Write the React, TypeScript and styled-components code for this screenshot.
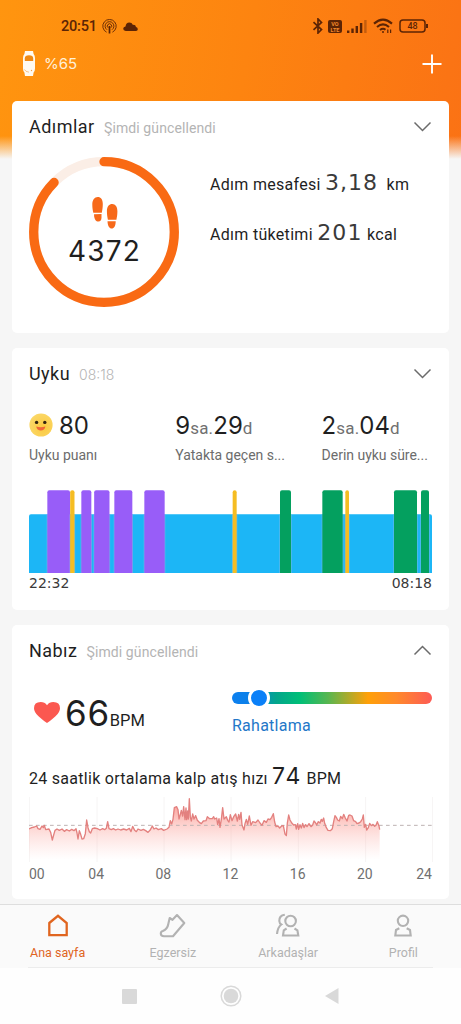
import React from 'react';
import styled, { createGlobalStyle } from 'styled-components';

const Global = createGlobalStyle`
  *, *::before, *::after { box-sizing: border-box; }
  body { margin: 0; background: #f6f6f6; }
  svg { display: block; flex: none; }
`;

const Page = styled.main`
  width: 461px;
  height: 1024px;
  overflow: hidden;
  display: flex;
  flex-direction: column;
  font-family: Roboto, "Liberation Sans", sans-serif;
  color: #1f1f1f;
  background:
    linear-gradient(180deg, rgba(246, 246, 246, 0) 136px, #f6f6f6 159px),
    linear-gradient(100deg, #ff950f 0, #fd8410 40%, #fa6c16 88%, #f96818 100%);
`;

const StatusBar = styled.header`
  height: 45px;
  padding: 7px 32px 0 61px;
  display: flex;
  align-items: center;
  color: #5c2405;
`;

const Clock = styled.span`
  font-size: 14.5px;
  font-weight: 500;
  width: 41px;
  letter-spacing: -0.2px;
`;

const StatusIcons = styled.div<{ $end?: boolean }>`
  display: flex;
  align-items: center;
  gap: ${(p) => (p.$end ? 5 : 6)}px;
  margin-left: ${(p) => (p.$end ? 'auto' : '0')};
`;

const DeviceBar = styled.div`
  height: 56px;
  padding: 0 19px 19px 23px;
  display: flex;
  align-items: center;
  color: #fff;
`;

const DeviceCharge = styled.span`
  flex: 1;
  margin-left: 9px;
  font: 400 15px Inter, sans-serif;
  color: #fff0d8;
`;

const Cards = styled.div`
  flex: 1;
  padding: 0 12px;
  display: flex;
  flex-direction: column;
  gap: 15px;
`;

const Card = styled.section<{ $height: number }>`
  flex: none;
  height: ${(p) => p.$height}px;
  padding: 0 17px;
  border-radius: 5px;
  background: #fff;
`;

const CardHead = styled.div`
  height: 52px;
  display: flex;
  align-items: baseline;
  line-height: 52px;
`;

const CardTitle = styled.h2<{ $width: number }>`
  margin: 0;
  width: ${(p) => p.$width}px;
  white-space: nowrap;
  font-size: 18px;
  font-weight: 400;
  letter-spacing: 0.45px;
`;

const CardNote = styled.span<{ $wide?: boolean }>`
  flex: 1;
  font-size: 14px;
  letter-spacing: 0.1px;
  color: #b4b4b4;
  ${(p) => p.$wide && 'font-family: Inter, sans-serif; font-weight: 350; font-size: 14px; letter-spacing: 0;'}
`;

const ChevronBox = styled.span`
  align-self: center;
  margin-top: -1px;
`;

const StepsBody = styled.div`
  display: flex;
  padding-top: 4px;
  gap: 30px;
`;

const Ring = styled.div`
  display: grid;
  width: 151px;
  height: 151px;
  > * { grid-area: 1 / 1; }
`;

const RingContent = styled.div`
  display: flex;
  flex-direction: column;
  align-items: center;
  padding-top: 40px;
`;

const StepCount = styled.span`
  margin-top: 2px;
  font: 400 28px/40px Inter, sans-serif;
  letter-spacing: 1.2px;
`;

const StepStats = styled.div`
  padding-top: 3px;
`;

const StatLine = styled.div`
  height: 50px;
  line-height: 50px;
  font-size: 16px;
  white-space: pre;
  letter-spacing: 0.3px;
`;

const SlabNumber = styled.span<{ $size: number; $spacing?: number }>`
  font-family: "DejaVu Sans", sans-serif;
  font-size: ${(p) => p.$size}px;
  line-height: 1;
  letter-spacing: ${(p) => p.$spacing ?? 0}px;
  color: #3a3a3a;
`;

const Figure = styled.span<{ $size: number; $spacing?: number }>`
  font-family: Inter, sans-serif;
  font-weight: 400;
  font-size: ${(p) => p.$size}px;
  letter-spacing: ${(p) => p.$spacing ?? 0}px;
  line-height: 1;
`;

const Metrics = styled.div`
  display: grid;
  grid-template-columns: 146.3px 146.3px 1fr;
  height: 90px;
`;

const MetricValue = styled.div`
  display: flex;
  align-items: baseline;
  height: 44px;
  line-height: 56px;
  &::before { content: '\\200b'; font-size: 17px; }
  svg { align-self: center; margin: 6px 6px 0 0; }
`;

const Unit = styled.span`
  font-size: 17px;
  letter-spacing: 0.2px;
  color: #707070;
`;

const MetricLabel = styled.div`
  font-size: 14px;
  line-height: 22px;
  letter-spacing: -0.02px;
  white-space: nowrap;
  color: #6c6c6c;
`;

const TimeRange = styled.div`
  display: flex;
  justify-content: space-between;
  padding-top: 3px;
`;

const PulseRow = styled.div`
  display: flex;
  height: 78px;
`;

const PulseNow = styled.div`
  display: flex;
  align-items: baseline;
  width: 203px;
  padding-left: 5px;
  line-height: 88px;
  font-size: 16.5px;
  svg { align-self: center; margin: -8px 5px 0 0; }
`;

const ZoneColumn = styled.div`
  width: 200px;
  padding-top: 15px;
`;

const ZoneTrack = styled.div`
  height: 12px;
  border-radius: 6px;
  background: linear-gradient(90deg, #0c80f0 0, #0c80e8 8%, #03a58c 22%, #00bf77 34%, #58b650 48%, #ffa008 68%, #ff8a2b 82%, #fd5b55 100%);
`;

const ZoneThumb = styled.div`
  position: relative;
  top: -5px;
  left: 16px;
  width: 22px;
  height: 22px;
  border: 3px solid #fff;
  border-radius: 50%;
  background: #0a80f8;
`;

const ZoneName = styled.div`
  margin-top: 12px;
  font-size: 16px;
  line-height: 20px;
  letter-spacing: 0.25px;
  color: #2377c8;
`;

const Average = styled.div`
  height: 42px;
  line-height: 48px;
  font-size: 16px;
  letter-spacing: 0.28px;
  white-space: pre;
`;

const Hours = styled.div`
  display: grid;
  grid-template-columns: 0.5fr repeat(5, 1fr) 0.5fr;
  text-align: center;
  font-size: 14px;
  line-height: 24px;
  color: #707070;
  span:first-child { text-align: left; }
  span:last-child { text-align: right; }
`;

const TabBar = styled.nav`
  flex: none;
  height: 64px;
  display: grid;
  grid-template-columns: repeat(4, 1fr);
  border-top: 1px solid #dedede;
  background: #fafafa;
`;

const Tab = styled.a<{ $active?: boolean }>`
  display: flex;
  flex-direction: column;
  align-items: center;
  padding-top: 8px;
  font-size: 12.5px;
  line-height: 28px;
  color: ${(p) => (p.$active ? '#e0651f' : '#b2b2b2')};
`;

const SystemNav = styled.div`
  flex: none;
  height: 56px;
  display: flex;
  justify-content: center;
  align-items: center;
  gap: 83px;
  background: #fefefe;
`;

const Divider = styled.hr`
  flex: none;
  width: 405px;
  height: 1px;
  margin: -1px auto 0;
  border: 0;
  background: #ececec;
`;

const Chevron = ({ up }: { up?: boolean }) => (
  <ChevronBox>
    <svg width="19" height="11" viewBox="0 0 19 11" fill="none" stroke="#6b6b6b" strokeWidth="1.5">
      <path d={up ? 'M1.5 9.5 9.5 1.5l8 8' : 'M1.5 1.5l8 8 8-8'} />
    </svg>
  </ChevronBox>
);

type Stage = 'rem' | 'awake' | 'deep';
const stageColor: Record<Stage, string> = { rem: '#985df8', awake: '#f5bd22', deep: '#04a05f' };
const stages: [number, number, Stage][] = [
  [55, 68, 'rem'], [123.5, 13, 'awake'], [157, 30, 'rem'], [195.5, 46, 'rem'],
  [256, 54, 'rem'], [346, 61, 'rem'], [611, 12, 'awake'], [753, 33, 'deep'],
  [880, 61, 'deep'], [949, 11, 'awake'], [1095, 69, 'deep'], [1176, 24, 'deep'],
];

const SleepChart = () => (
  <svg width="403" height="83" viewBox="0 0 1209 249">
    <path d="M0 249V79q0-6 6-6h1197q6 0 6 6v170Z" fill="#1cb6f6" />
    {stages.map(([x, w, kind]) => {
      const r = Math.min(w, 12) / 2;
      return (
        <g key={x}>
          <rect x={x - 2} y="73" width={w + 4} height="176" fill="#8fb9df" opacity="0.6" />
          <path
            d={`M${x} 249V${r + 1}q0-${r} ${r}-${r}h${w - 2 * r}q${r} 0 ${r} ${r}V249Z`}
            fill={stageColor[kind]}
          />
        </g>
      );
    })}
  </svg>
);

const pulse =
  '87,208 95,204 103,202 110,199 114,207 120,209 126,199 130,204 133,197 137,210 147,208 152,218 157,241 161,226 165,212 171,208 178,212 186,208 193,215 200,210 208,214 215,209 222,213 228,207 231,220 234,238 238,213 242,224 246,238 251,237 256,222 260,181 264,204 268,216 272,220 277,207 284,205 292,207 300,211 308,207 314,210 319,206 323,186 327,207 334,210 340,207 347,211 354,208 362,211 371,208 380,211 388,206 393,216 398,200 404,212 409,216 414,208 423,212 430,209 437,213 444,218 450,212 457,199 462,208 468,205 475,210 484,207 491,212 501,208 507,203 511,183 515,193 519,179 523,144 530,141 534,150 537,178 541,164 544,152 548,169 551,141 555,180 558,145 560,180 563,154 565,178 568,117 571,172 574,184 578,163 582,178 587,168 592,182 598,188 604,192 610,184 618,183 622,171 629,177 637,177 641,171 644,178 650,175 653,195 657,177 660,203 664,179 668,144 672,178 679,171 683,182 687,187 691,165 696,183 701,171 707,163 712,184 716,164 719,179 723,158 726,196 732,211 735,192 739,179 743,194 748,169 753,197 758,186 767,189 774,181 780,190 786,197 792,183 799,188 804,178 810,180 815,173 820,162 824,187 828,201 834,199 839,205 845,199 850,198 855,223 859,228 862,190 866,166 870,181 876,191 881,196 886,195 889,208 893,192 896,209 900,195 904,205 908,191 912,204 917,195 921,201 927,192 933,201 938,196 942,184 947,190 950,196 955,186 960,190 964,179 967,185 971,175 974,191 979,204 984,212 991,213 997,207 1001,186 1005,168 1009,173 1013,181 1018,184 1022,170 1027,177 1031,164 1036,175 1041,184 1046,167 1050,166 1056,169 1061,183 1067,186 1071,192 1077,190 1082,186 1087,178 1090,166 1093,203 1097,194 1100,211 1105,204 1109,191 1114,198 1119,194 1124,200 1128,197 1132,186 1137,199 1139,210';

const PulseChart = () => (
  <svg width="404" height="65" viewBox="87 112 1212 195">
    <defs>
      <linearGradient id="pulseFill" x1="0" y1="117" x2="0" y2="300" gradientUnits="userSpaceOnUse">
        <stop offset="0" stopColor="#f86b61" stopOpacity="0.75" />
        <stop offset="0.4" stopColor="#fb8b82" stopOpacity="0.42" />
        <stop offset="0.66" stopColor="#fba59e" stopOpacity="0.26" />
        <stop offset="1" stopColor="#fdb5ae" stopOpacity="0" />
      </linearGradient>
    </defs>
    {[88, 291, 492, 693, 895, 1097, 1298].map((x) => (
      <path key={x} d={`M${x} 112V307`} stroke="#f6f4f4" strokeWidth="3" />
    ))}
    <path d={`M87,300 L${pulse} L1139,300Z`} fill="url(#pulseFill)" />
    <path d="M87 197H1298" stroke="#bdb3b3" strokeWidth="3" strokeDasharray="11 10" />
    <polyline points={pulse} fill="none" stroke="#e3817f" strokeWidth="4" strokeLinejoin="round" />
  </svg>
);

const Smiley = () => (
  <svg width="24" height="24" viewBox="0 0 24 24">
    <defs>
      <radialGradient id="face" cx="0.6" cy="0.6" r="0.6">
        <stop offset="0" stopColor="#fbc93e" />
        <stop offset="1" stopColor="#fbd766" />
      </radialGradient>
    </defs>
    <circle cx="12" cy="12" r="11.6" fill="url(#face)" />
    <circle cx="7.6" cy="9.4" r="1.7" fill="#33230f" />
    <circle cx="15.8" cy="9.4" r="1.7" fill="#33230f" />
    <path d="M7.2 13.6q4.6 1.3 9.2 0-.8 4-4.6 4t-4.6-4Z" fill="#ef6638" />
  </svg>
);

export default function App() {
  return (
    <>
      <Global />
      <Page>
        <StatusBar>
          <Clock>20:51</Clock>
          <StatusIcons>
            <svg width="15" height="15" viewBox="0 0 15 15" fill="none" stroke="currentColor" strokeWidth="0.9">
              <path d="M4.6 13.2a6.7 6.7 0 1 1 5.8 0" />
              <path d="M5 10.7a4.4 4.4 0 1 1 5 0" />
              <path d="M6.2 8.8a2.2 2.2 0 1 1 2.6 0" />
              <path d="M7.5 7v7.5" strokeWidth="1.7" />
            </svg>
            <svg width="15" height="9" viewBox="0 0 15 9" fill="currentColor">
              <path d="M2.8 9Q.2 8.8.2 6.8.3 5 2.5 4.5 3 .5 6.3.5q2.5 0 3.7 2.4 2.6-.3 3 2.2 1.8.5 1.8 2.1 0 1.6-1.8 1.8Z" />
            </svg>
          </StatusIcons>
          <StatusIcons $end>
            <svg width="11" height="16" viewBox="0 0 11 16" fill="none" stroke="currentColor" strokeWidth="1.7">
              <path d="M1.500 4.200l8 7.300L6 15V1L9.500 4.500l-8 7.300" />
            </svg>
            <svg width="14" height="13" viewBox="0 0 14 13">
              <rect width="14" height="13" rx="2" fill="currentColor" />
              <g fill="#f58a2a" fontFamily="Roboto, sans-serif" fontWeight="700" textAnchor="middle">
                <text x="7" y="6" fontSize="5.5">VO</text>
                <text x="7" y="11.5" fontSize="5.5">LTE</text>
              </g>
            </svg>
            <svg width="21" height="13" viewBox="0 0 21 13" fill="currentColor">
              <rect x="0" y="10.5" width="2.4" height="2.5" />
              <rect x="4.3" y="8.5" width="2.4" height="4.5" />
              <rect x="8.6" y="6" width="2.4" height="7" />
              <rect x="12.9" y="3" width="2.4" height="10" />
              <rect x="17.2" y="0" width="2.4" height="13" opacity="0.35" />
            </svg>
            <svg width="21" height="16" viewBox="0 0 21 16" fill="none" stroke="currentColor" strokeWidth="2.1">
              <path d="M1 5.6q9-8 18 0" />
              <path d="M4 9q6-5.2 12 0" />
              <path d="M7 12q3-2.3 5.5-.3" />
              <circle cx="10" cy="14" r="1" fill="currentColor" stroke="none" />
              <path d="M14.8 11.5v3.5M17.6 11.5v3.5" strokeWidth="1.2" />
            </svg>
            <svg width="30" height="14" viewBox="0 0 30 14">
              <rect x="1" y="1" width="25" height="12" rx="3" fill="none" stroke="currentColor" strokeWidth="1.5" />
              <path d="M28 5v4" stroke="currentColor" strokeWidth="2" />
              <text x="13.5" y="10.3" fill="currentColor" fontFamily="Roboto, sans-serif" fontSize="9" fontWeight="500" textAnchor="middle">48</text>
            </svg>
          </StatusIcons>
        </StatusBar>

        <DeviceBar>
          <svg width="12" height="25" viewBox="0 0 12 25">
            <path d="M2 0h8l.6 3Q12 4.5 12 7v10.5q0 2.8-1.4 4L10 25H2l-.6-3.5Q0 20.3 0 17.5V7Q0 4.5 1.4 3Z" fill="#fffaf0" />
            <path d="M1.8 10V7.5Q1.8 4.2 6 4.2t4.2 3.3V10Z" fill="#ef8a15" />
            <path d="M1.5 18.5q.8 2.2 4.5 2.7" fill="none" stroke="#f3a04a" strokeWidth="0.6" />
            <circle cx="8.5" cy="19.5" r="0.7" fill="#f3a04a" />
          </svg>
          <DeviceCharge>%65</DeviceCharge>
          <svg width="20" height="20" viewBox="0 0 20 20" stroke="#fff" strokeWidth="1.9">
            <path d="M10 .5v19M.5 10h19" />
          </svg>
        </DeviceBar>

        <Cards>
          <Card $height={232}>
            <CardHead>
              <CardTitle $width={75}>Adımlar</CardTitle>
              <CardNote>Şimdi güncellendi</CardNote>
              <Chevron />
            </CardHead>
            <StepsBody>
              <Ring>
                <svg width="151" height="151" viewBox="0 0 151 151" fill="none" strokeWidth="9.3">
                  <circle cx="75" cy="75" r="70.3" stroke="#fbeee6" />
                  <circle cx="75" cy="75" r="70.3" stroke="#f96a14" strokeLinecap="round" pathLength="5000" strokeDasharray="4372 5000" transform="rotate(-90 75 75)" />
                </svg>
                <RingContent>
                  <svg width="26" height="32" viewBox="0 0 26 32" fill="#f7691a">
                    <path d="M5.8 0c3 0 5 2.6 5 7 0 3.8-.5 6.3-1 8.7L1.3 15.8C.8 13.4.3 11 .3 7.5.3 3 2.5 0 5.8 0Z" />
                    <path d="M2 17.2 9.5 17v3.5c0 2.5-1 4-3.2 4S2.2 23 2 17.2Z" />
                    <path d="M20.2 7c3.3 0 5.2 3 5.2 7.3 0 3.6-.5 6-1 8.5l-8.5-.1c-.5-2.4-1-4.9-1-8.7C14.9 9.6 17.2 7 20.2 7Z" />
                    <path d="M15.5 24.2h8.2c-.1 5-1.6 7.3-4 7.3-2.2 0-4-2.3-4.2-7.3Z" />
                  </svg>
                  <StepCount>4372</StepCount>
                </RingContent>
              </Ring>
              <StepStats>
                <StatLine>Adım mesafesi <SlabNumber $size={22} $spacing={1}>3,18</SlabNumber>  km</StatLine>
                <StatLine>Adım tüketimi <SlabNumber $size={22} $spacing={1.2}>201</SlabNumber> kcal</StatLine>
              </StepStats>
            </StepsBody>
          </Card>

          <Card $height={262}>
            <CardHead>
              <CardTitle $width={50}>Uyku</CardTitle>
              <CardNote $wide>08:18</CardNote>
              <Chevron />
            </CardHead>
            <Metrics>
              <div>
                <MetricValue><Smiley /><Figure $size={24}>80</Figure></MetricValue>
                <MetricLabel>Uyku puanı</MetricLabel>
              </div>
              <div>
                <MetricValue>
                  <Figure $size={24}>9</Figure><Unit>sa.</Unit><Figure $size={24}>29</Figure><Unit>d</Unit>
                </MetricValue>
                <MetricLabel>Yatakta geçen s...</MetricLabel>
              </div>
              <div>
                <MetricValue>
                  <Figure $size={24}>2</Figure><Unit>sa.</Unit><Figure $size={24}>04</Figure><Unit>d</Unit>
                </MetricValue>
                <MetricLabel>Derin uyku süre...</MetricLabel>
              </div>
            </Metrics>
            <SleepChart />
            <TimeRange>
              <SlabNumber $size={14}>22:32</SlabNumber>
              <SlabNumber $size={14}>08:18</SlabNumber>
            </TimeRange>
          </Card>

          <Card $height={274}>
            <CardHead>
              <CardTitle $width={57.5}>Nabız</CardTitle>
              <CardNote>Şimdi güncellendi</CardNote>
              <Chevron up />
            </CardHead>
            <PulseRow>
              <PulseNow>
                <svg width="26" height="21" viewBox="0 0 26 21" fill="#fb5850">
                  <path d="M13 21Q11.5 20.5 4.5 14.3 0 10.3 0 6.3 0 0 6.7 0 10.8 0 13 3.3 15.2 0 19.3 0 26 0 26 6.3q0 4-4.5 8Q14.5 20.5 13 21Z" />
                </svg>
                <Figure $size={35} $spacing={0.7}>66</Figure>BPM
              </PulseNow>
              <ZoneColumn>
                <ZoneTrack><ZoneThumb /></ZoneTrack>
                <ZoneName>Rahatlama</ZoneName>
              </ZoneColumn>
            </PulseRow>
            <Average>24 saatlik ortalama kalp atış hızı <Figure $size={23} $spacing={1.8}>74</Figure> BPM</Average>
            <PulseChart />
            <Hours>
              {['00', '04', '08', '12', '16', '20', '24'].map((h) => <span key={h}>{h}</span>)}
            </Hours>
          </Card>
        </Cards>

        <TabBar>
          <Tab $active>
            <svg width="24" height="26" viewBox="0 0 24 26" fill="none" stroke="currentColor" strokeWidth="2.3">
              <path d="M3.3 10 12 2.8l8.700 7.200v12.200H3.3Z" />
            </svg>
            Ana sayfa
          </Tab>
          <Tab>
            <svg width="28" height="26" viewBox="0 0 28 26" fill="none" stroke="currentColor" strokeWidth="2.1" strokeLinejoin="round">
              <path d="M1.800 20.500q0-2 2-2.500Q8.500 16 9.300 11L10.700 5l2.800 1.800L18 2l7.300 8L14 23.200H5Q1.800 23.200 1.800 20.500Z" />
            </svg>
            Egzersiz
          </Tab>
          <Tab>
            <svg width="26" height="26" viewBox="0 0 26 26" fill="none" stroke="currentColor" strokeWidth="2.1">
              <circle cx="15.600" cy="8" r="5.300" />
              <path d="M11.600 15.500 8.800 17.300 8 22.500H23.300L22.400 17.300 19.500 15.500M9.800 1.700Q4 2.500 4.300 8 4.500 10.500 6.300 11.500 2.800 14 2 21" />
            </svg>
            Arkadaşlar
          </Tab>
          <Tab>
            <svg width="22" height="26" viewBox="0 0 22 26" fill="none" stroke="currentColor" strokeWidth="2.1">
              <circle cx="11" cy="7.8" r="5.2" />
              <path d="M7.3 15.3 4 17l-.7 5.5h15.400L18 17l-3.300-1.700" />
            </svg>
            Profil
          </Tab>
        </TabBar>
        <Divider />
        <SystemNav>
          <svg width="15" height="15"><rect width="15" height="15" rx="1" fill="#d9d9d9" /></svg>
          <svg width="22" height="22" viewBox="0 0 22 22">
            <circle cx="11" cy="11" r="9.8" fill="none" stroke="#d9d9d9" strokeWidth="1.5" />
            <circle cx="11" cy="11" r="7.3" fill="#d9d9d9" />
          </svg>
          <svg width="14" height="16" viewBox="0 0 14 16"><path d="M13.5 0v16L0 8Z" fill="#d9d9d9" /></svg>
        </SystemNav>
      </Page>
    </>
  );
}
